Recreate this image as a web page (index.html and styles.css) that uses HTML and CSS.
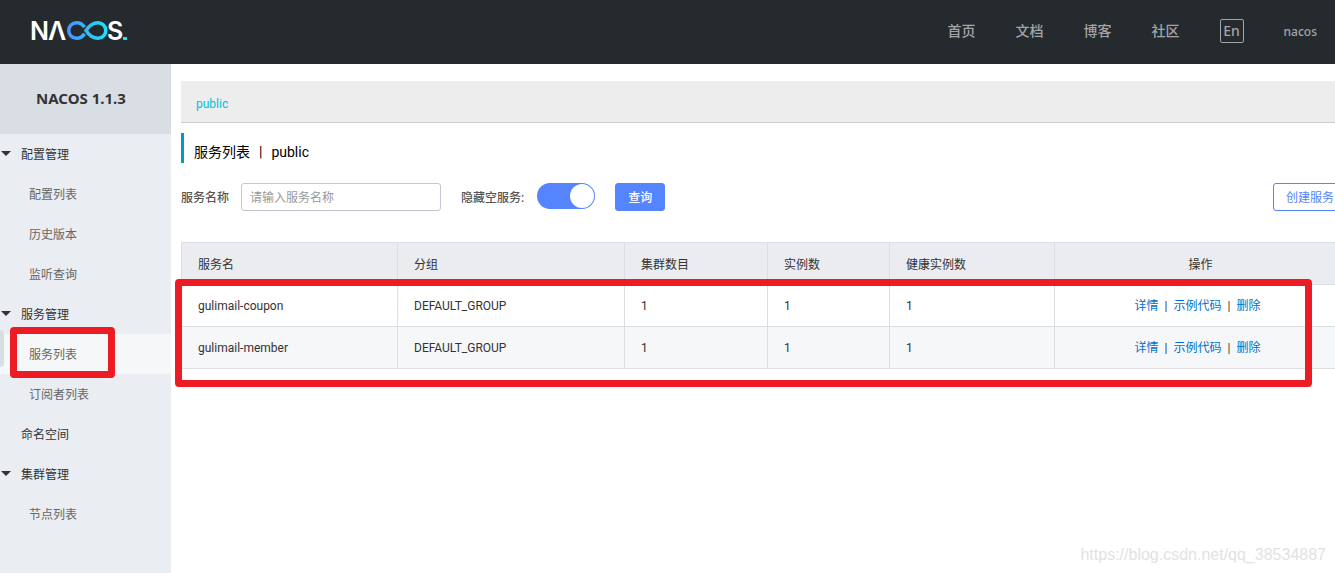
FILE: index.html
```html
<!DOCTYPE html>
<html lang="zh-CN">
<head>
<meta charset="utf-8">
<title>Nacos</title>
<link rel="stylesheet" href="styles.css">
</head>
<body>
<header class="header">
  <a class="logo" href="#" aria-label="Nacos">
    <svg width="104" height="40" viewBox="-2 -8 104 40">
      <defs>
        <linearGradient id="loop" gradientUnits="userSpaceOnUse" x1="36" y1="0" x2="76" y2="0">
          <stop offset="0" stop-color="#4790ff"/>
          <stop offset="1" stop-color="#1de3f2"/>
        </linearGradient>
      </defs>
      <text class="logo-text" x="-1" y="20">N</text>
      <text class="logo-text" x="17" y="20">Λ</text>
      <path d="M53.500 7.200C51.500 4 49 2.700 45.500 2.700a7.800 7.800 0 0 0 0 15.600C49 18.300 51.500 17 53.500 13.800M55 10.500C58.500 5 62 2.700 67 2.700a7.800 7.800 0 0 1 0 15.600C62 18.300 58.500 16 55 10.500Z" fill="none" stroke="url(#loop)" stroke-width="3.500"/>
      <text class="logo-text" x="76" y="20">S</text>
      <rect x="92" y="17" width="4" height="3" fill="#1de3f2"/>
    </svg>
  </a>
  <nav class="nav">
    <a href="#">首页</a>
    <a href="#">文档</a>
    <a href="#">博客</a>
    <a href="#">社区</a>
    <button class="lang" type="button">En</button>
    <a class="user" href="#">nacos</a>
  </nav>
</header>
<div class="body">
  <aside class="sidebar">
    <h1 class="product">NACOS 1.1.3</h1>
    <ul class="menu">
      <li class="group"><a href="#">配置管理</a></li>
      <li class="sub"><a href="#">配置列表</a></li>
      <li class="sub"><a href="#">历史版本</a></li>
      <li class="sub"><a href="#">监听查询</a></li>
      <li class="group"><a href="#">服务管理</a></li>
      <li class="sub active"><a href="#">服务列表</a><span class="handle"></span><span class="mark mark-menu"></span></li>
      <li class="sub"><a href="#">订阅者列表</a></li>
      <li class="single"><a href="#">命名空间</a></li>
      <li class="group"><a href="#">集群管理</a></li>
      <li class="sub"><a href="#">节点列表</a></li>
    </ul>
  </aside>
  <main class="main">
    <div class="namespaces"><a href="#">public</a></div>
    <h2 class="title"><span>服务列表</span><span>|</span><span>public</span></h2>
    <form class="filters">
      <label for="service">服务名称</label>
      <input class="field" id="service" type="text" placeholder="请输入服务名称">
      <label class="hide-label" for="hide-empty">隐藏空服务:</label>
      <input class="switch" id="hide-empty" type="checkbox" checked>
      <button class="btn primary" type="button">查询</button>
      <button class="btn outline" type="button">创建服务</button>
    </form>
    <div class="table-wrap">
      <table class="table">
        <colgroup><col class="c-name"><col class="c-group"><col class="c-cluster"><col class="c-count"><col class="c-healthy"><col></colgroup>
        <thead>
          <tr><th>服务名</th><th>分组</th><th>集群数目</th><th>实例数</th><th>健康实例数</th><th class="ops">操作</th></tr>
        </thead>
        <tbody>
          <tr><td>gulimail-coupon</td><td>DEFAULT_GROUP</td><td>1</td><td>1</td><td>1</td><td class="ops"><div class="links"><a href="#">详情</a><span>|</span><a href="#">示例代码</a><span>|</span><a href="#">删除</a></div></td></tr>
          <tr><td>gulimail-member</td><td>DEFAULT_GROUP</td><td>1</td><td>1</td><td>1</td><td class="ops"><div class="links"><a href="#">详情</a><span>|</span><a href="#">示例代码</a><span>|</span><a href="#">删除</a></div></td></tr>
        </tbody>
      </table>
      <span class="mark mark-table"></span>
    </div>
  </main>
</div>
<div class="watermark">https://blog.csdn.net/qq_38534887</div>
</body>
</html>
```
FILE: styles.css
```css
* { box-sizing: border-box; }
body {
  margin: 0;
  min-height: 100vh;
  display: flex;
  flex-direction: column;
  overflow: hidden;
  position: relative;
  background: #fff;
  color: #333;
  font: 12px/20px Roboto, "Noto Sans CJK SC", sans-serif;
}
a { color: inherit; text-decoration: none; }
button, input { font: inherit; margin: 0; }

.header {
  display: flex;
  align-items: center;
  justify-content: space-between;
  height: 64px;
  padding: 0 18px 0 29px;
  background: #252a2f;
}
.logo { display: flex; }
.logo-text { font: 600 25px Inter, sans-serif; fill: #fff; }
.nav {
  display: flex;
  align-items: center;
  gap: 40px;
  padding-bottom: 2px;
  color: #a3a5a7;
  font-family: "Noto Sans", "Noto Sans CJK SC", sans-serif;
  font-size: 14px;
  font-weight: 500;
}
.lang {
  width: 24px;
  height: 24px;
  padding: 0;
  border: 1px solid #a3a5a7;
  border-radius: 2px;
  background: none;
  color: inherit;
  font-size: 14px;
  line-height: 20px;
}
.user { padding-top: 2px; font-size: 12px; }

.body { display: flex; flex: 1; }
.sidebar { flex: none; width: 171px; background: #eaedf2; }
.product {
  margin: 0;
  height: 70px;
  padding-right: 9px;
  background: #d9dde4;
  text-align: center;
  font-family: "Noto Sans", sans-serif;
  font-size: 15px;
  line-height: 68px;
}
.menu { margin: 0; padding: 0; list-style: none; }
.menu li { position: relative; display: flex; align-items: center; height: 40px; padding: 1px 0 0 21px; }
.menu li.sub { padding-left: 29px; color: #666; }
.menu .active { background: #f5f7f8; }
.group::before {
  content: "";
  position: absolute;
  left: 1px;
  top: 17px;
  border: 5px solid transparent;
  border-top-color: #333;
  border-bottom-width: 0;
}
.handle {
  position: absolute;
  left: 0;
  top: -4px;
  width: 4px;
  height: 37px;
  border-radius: 0 4px 4px 0;
  background: #d9dde4;
}
.mark { position: absolute; border: 7px solid #ed1c24; border-radius: 4px; pointer-events: none; }
.mark-menu { left: 10px; top: -7px; width: 105px; height: 51px; }
.mark-table { left: -6px; right: 35px; top: 37px; bottom: -18px; }

.main { flex: 1; min-width: 0; margin-right: -12px; padding: 17px 0 0 10px; }
.namespaces {
  display: flex;
  align-items: center;
  height: 42px;
  padding: 4px 15px 0;
  border-bottom: 1px solid #ccc;
  background: #ededed;
  color: #00c1de;
}
.title {
  display: flex;
  align-items: center;
  gap: 9px;
  margin: 10px 0 20px;
  height: 30px;
  padding: 8px 0 0 10px;
  border-left: 3px solid #09c;
  color: #000;
  font-size: 14px;
  font-weight: 400;
}
.filters { display: flex; align-items: center; height: 28px; color: #555; font-weight: 500; }
.filters label { padding-top: 1px; }
.field {
  width: 200px;
  height: 28px;
  margin: 0 20px 0 12px;
  padding: 1px 8px 0;
  border: 1px solid #c4c6cf;
  border-radius: 3px;
  font-weight: 400;
}
.field::placeholder { color: #999; }
.hide-label { margin-right: 13px; }
.switch {
  appearance: none;
  display: flex;
  justify-content: flex-end;
  width: 58px;
  height: 26px;
  margin: 0 20px 2px 0;
  padding: 1px;
  border-radius: 13px;
  background: #5584ff;
}
.switch::before { content: ""; width: 24px; height: 24px; border-radius: 50%; background: #fff; }
.btn { height: 28px; padding: 1px 12px 0; border: 1px solid #5584ff; border-radius: 3px; }
.primary { background: #5584ff; color: #fff; }
.outline { margin-left: auto; background: #fff; color: #5584ff; font-weight: 400; }

.table-wrap { position: relative; margin-top: 31px; }
.table { width: 100%; table-layout: fixed; border-collapse: collapse; }
.c-name { width: 216px; }
.c-group { width: 227px; }
.c-cluster { width: 143px; }
.c-count { width: 122px; }
.c-healthy { width: 165px; }
.table th, .table td { height: 42px; padding: 0 16px; border: 1px solid #dcdee3; text-align: left; font-weight: 400; }
.table th { padding-top: 2px; background: #ebecf0; }
.table tbody tr:nth-child(even) { background: #f5f7f9; }
.table .ops { text-align: center; }
.links { display: flex; justify-content: center; gap: 6px; padding-right: 6px; }
.links a { color: #0070cc; }

.watermark {
  position: absolute;
  right: 9px;
  bottom: 8px;
  color: #e2e2e2;
  font: 16px/20px "Liberation Sans", sans-serif;
}
```
